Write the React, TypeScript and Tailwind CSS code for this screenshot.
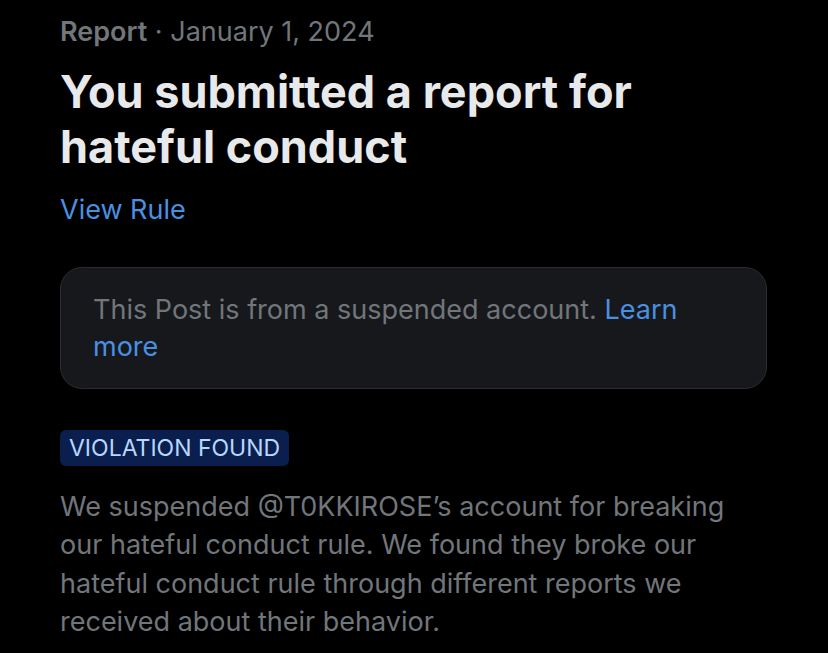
export default function App() {
  return (
    <div className="min-h-[653px] w-full bg-black pl-[60px] pr-[61px] pt-[14px] font-['Inter','Liberation_Sans',sans-serif]">
      <div className="text-[27px] leading-[36px] text-[#71767b]">
        <span className="font-semibold">Report</span>
        <span> · January 1, 2024</span>
      </div>
      <h1 className="mt-[14px] text-[45px] leading-[55px] font-bold text-[#e7e9ea]">
        You submitted a report for
        <br />
        hateful conduct
      </h1>
      <div className="mt-[18px] text-[27px] leading-[36px] text-[#4a90e2]">View Rule</div>
      <div className="mt-[39px] rounded-[22px] border border-[#2a2c30] bg-[#17181c] pl-[32px] pr-[40px] pt-[23px] pb-[23px]">
        <p className="text-[27px] leading-[37px] text-[#71767b]">
          This Post is from a suspended account.{" "}
          <span className="text-[#4a90e2]">Learn</span>{" "}
          <span className="text-[#4a90e2]">more</span>
        </p>
      </div>
      <div className="mt-[41px] inline-block rounded-[6px] bg-[#0a1f4d] px-[9px] py-[3px] text-[23px] leading-[30px] text-[#b7d7ff]">
        VIOLATION FOUND
      </div>
      <p className="mt-[22px] text-[27px] leading-[38.3px] text-[#71767b]">
        We suspended @T0KKIROSE’s account for breaking our hateful conduct rule. We found they broke our hateful conduct rule through different reports we received about their behavior.
      </p>
    </div>
  );
}
